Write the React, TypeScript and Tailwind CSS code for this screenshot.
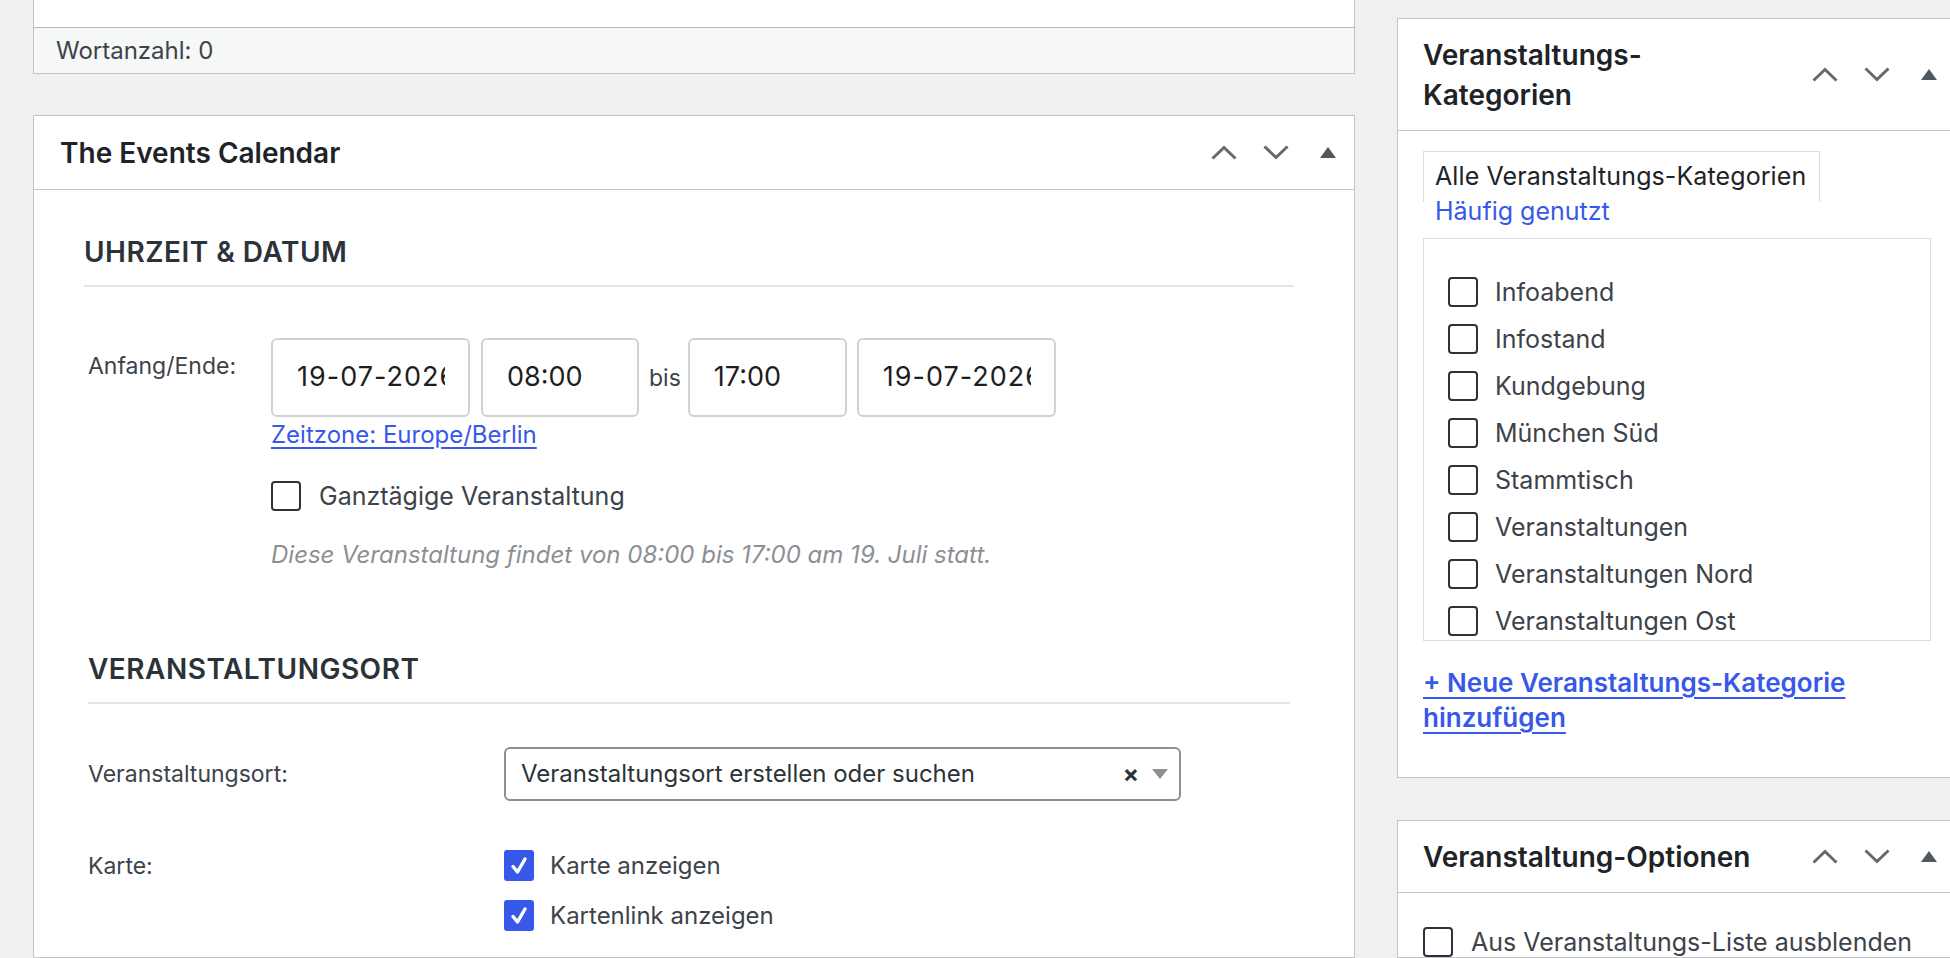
import React from "react";

const CATEGORIES = [
  "Infoabend",
  "Infostand",
  "Kundgebung",
  "München Süd",
  "Stammtisch",
  "Veranstaltungen",
  "Veranstaltungen Nord",
  "Veranstaltungen Ost",
];

function ChevronUp() {
  return (
    <svg width="26" height="15" viewBox="0 0 26 15" fill="none">
      <path d="M1.5 13.5L13 2.5L24.5 13.5" stroke="#646970" strokeWidth="3" />
    </svg>
  );
}

function ChevronDown() {
  return (
    <svg width="26" height="15" viewBox="0 0 26 15" fill="none">
      <path d="M1.5 1.5L13 12.5L24.5 1.5" stroke="#646970" strokeWidth="3" />
    </svg>
  );
}

function Triangle() {
  return (
    <svg width="16" height="11" viewBox="0 0 16 11">
      <polygon points="0,11 8,0 16,11" fill="#50575e" />
    </svg>
  );
}

// hoch / runter / zuklappen
function BoxControls() {
  return (
    <div className="flex items-center">
      <span className="flex w-[52px] justify-center">
        <ChevronUp />
      </span>
      <span className="flex w-[52px] justify-center">
        <ChevronDown />
      </span>
      <span className="flex w-[52px] justify-center">
        <Triangle />
      </span>
    </div>
  );
}

function Checkbox({ checked = false, className = "" }: { checked?: boolean; className?: string }) {
  if (checked) {
    return (
      <span className={`flex shrink-0 items-center justify-center rounded-[3px] bg-[#3858e9] ${className}`}>
        <svg width="18" height="20" viewBox="0 0 18 20" fill="none">
          <path d="M3 10.5L7.5 16L15 3" stroke="#fff" strokeWidth="3.4" strokeLinecap="round" strokeLinejoin="round" />
        </svg>
      </span>
    );
  }
  return <span className={`block shrink-0 rounded-[4px] border-2 border-[#2c3338] bg-white ${className}`} />;
}

// Datums-/Zeitfeld; das Datum ist rechts abgeschnitten wie im Browser
function DateTimeField({ value, width, date = false }: { value: string; width: string; date?: boolean }) {
  return (
    <div className={`flex h-[79px] shrink-0 items-center rounded-[6px] border-2 border-[#d2d2d2] bg-white pl-[24px] ${width}`}>
      <div
        className={`overflow-hidden whitespace-nowrap text-[27px] text-[#1e1e1e] ${
          date ? "w-[148px] tracking-[1px]" : "w-[110px]"
        }`}
      >
        {value}
      </div>
    </div>
  );
}

export default function App() {
  return (
    <div className="flex h-[958px] w-[1950px] overflow-hidden bg-[#f0f0f1] font-['Inter','Noto_Sans',sans-serif] text-[#3c434a]">
      {/* linke Spalte */}
      <div className="ml-[33px] flex w-[1322px] shrink-0 flex-col">
        <div className="h-[27px] border-x border-[#c3c4c7] bg-white" />
        <div className="flex h-[47px] items-center border border-t-[#b4b6b9] border-x-[#c3c4c7] border-b-[#c3c4c7] bg-[#f6f7f7] pl-[22px] text-[24px]">
          Wortanzahl: 0
        </div>

        <div className="mt-[41px] flex-1 border border-[#c3c4c7] bg-white">
          <div className="flex h-[74px] items-center justify-between border-b border-[#c3c4c7] pl-[26px]">
            <h2 className="text-[28px] font-semibold text-[#1d2327]">The Events Calendar</h2>
            <BoxControls />
          </div>

          {/* Uhrzeit & Datum */}
          <div className="ml-[50px] mr-[60px] pt-[45px]">
            <h3 className="border-b-2 border-[#e4e4e4] pb-[16px] text-[28px] font-semibold uppercase leading-[34px] tracking-[0.5px] text-[#2c3338]">
              Uhrzeit &amp; Datum
            </h3>
            <div className="mt-[51px] flex">
              <div className="w-[187px] shrink-0 pl-[4px] pt-[14px] text-[23px] leading-[28px]">Anfang/Ende:</div>
              <div>
                <div className="flex items-center">
                  <DateTimeField value="19-07-2026" width="w-[199px]" date />
                  <div className="ml-[11px]">
                    <DateTimeField value="08:00" width="w-[158px]" />
                  </div>
                  <span className="ml-[10px] text-[23px] leading-[28px]">bis</span>
                  <div className="ml-[7px]">
                    <DateTimeField value="17:00" width="w-[159px]" />
                  </div>
                  <div className="ml-[10px]">
                    <DateTimeField value="19-07-2026" width="w-[199px]" date />
                  </div>
                </div>
                <a className="mt-[4px] block w-fit text-[24px] leading-[28px] text-[#3858e9] underline underline-offset-[4px]">
                  Zeitzone: Europe/Berlin
                </a>
                <label className="mt-[32px] flex items-center gap-[18px] text-[25px] leading-[30px]">
                  <Checkbox className="h-[30px] w-[30px]" />
                  Ganztägige Veranstaltung
                </label>
                <p className="mt-[30px] text-[24px] italic leading-[28px] text-[#8c8f94]">
                  Diese Veranstaltung findet von 08:00 bis 17:00 am 19. Juli statt.
                </p>
              </div>
            </div>
          </div>

          {/* Veranstaltungsort */}
          <div className="ml-[54px] mr-[64px] pt-[83px]">
            <h3 className="border-b-2 border-[#e4e4e4] pb-[16px] text-[28px] font-semibold uppercase leading-[34px] tracking-[0.5px] text-[#2c3338]">
              Veranstaltungsort
            </h3>
            <div className="mt-[43px] flex items-center">
              <div className="w-[416px] shrink-0 text-[23px] leading-[28px]">Veranstaltungsort:</div>
              <div className="flex h-[54px] w-[677px] items-center justify-between rounded-[6px] border-2 border-[#8c8f94] pl-[15px] pr-[11px]">
                <span className="text-[24px] text-[#2c3338]">Veranstaltungsort erstellen oder suchen</span>
                <span className="flex items-center gap-[13px]">
                  <span className="text-[24px] font-bold leading-none text-[#2c3338]">×</span>
                  <svg width="16" height="10" viewBox="0 0 16 10">
                    <polygon points="0,0 16,0 8,10" fill="#8c8f94" />
                  </svg>
                </span>
              </div>
            </div>
            <div className="mt-[49px] flex">
              <div className="w-[416px] shrink-0 pt-[2px] text-[23px] leading-[28px]">Karte:</div>
              <div className="flex flex-col gap-[19px]">
                <label className="flex items-center gap-[16px] text-[24px] leading-[30px]">
                  <Checkbox checked className="h-[31px] w-[30px]" />
                  Karte anzeigen
                </label>
                <label className="flex items-center gap-[16px] text-[24px] leading-[30px]">
                  <Checkbox checked className="h-[31px] w-[30px]" />
                  Kartenlink anzeigen
                </label>
              </div>
            </div>
          </div>
        </div>
      </div>

      {/* rechte Spalte */}
      <div className="ml-[42px] flex w-[559px] shrink-0 flex-col pt-[18px]">
        <div className="border border-[#c3c4c7] bg-white">
          <div className="flex h-[112px] items-center justify-between border-b border-[#c3c4c7] pl-[25px]">
            <h2 className="text-[28px] font-semibold leading-[40px] text-[#1d2327]">
              Veranstaltungs-
              <br />
              Kategorien
            </h2>
            <BoxControls />
          </div>
          <div className="px-[25px] pb-[42px] pt-[20px]">
            <div className="h-[51px] w-fit border-x border-t border-[#dcdcde] pl-[11px] pr-[13px] pt-[9px] text-[25px] leading-[30px] tracking-[0.1px] text-[#1d2327]">
              Alle Veranstaltungs-Kategorien
            </div>
            <div className="relative -mt-[6px] pl-[12px] text-[25px] leading-[30px] text-[#3858e9]">Häufig genutzt</div>
            <div className="mt-[12px] h-[403px] w-[508px] overflow-hidden border border-[#dcdcde] pl-[24px] pt-[38px]">
              <ul className="flex flex-col gap-[17px]">
                {CATEGORIES.map((c) => (
                  <li key={c} className="flex items-center gap-[17px] text-[25px] leading-[30px]">
                    <Checkbox className="h-[30px] w-[30px]" />
                    {c}
                  </li>
                ))}
              </ul>
            </div>
            <a className="mt-[24px] block text-[26px] font-semibold leading-[35px] text-[#3858e9] underline decoration-2 underline-offset-[5px]">
              + Neue Veranstaltungs-Kategorie hinzufügen
            </a>
          </div>
        </div>

        <div className="mt-[42px] flex-1 border border-[#c3c4c7] bg-white">
          <div className="flex h-[72px] items-center justify-between border-b border-[#c3c4c7] pl-[25px]">
            <h2 className="text-[28px] font-semibold text-[#1d2327]">Veranstaltung-Optionen</h2>
            <BoxControls />
          </div>
          <div className="pl-[25px] pt-[34px]">
            <label className="flex items-center gap-[18px] text-[25px] leading-[30px]">
              <Checkbox className="h-[30px] w-[30px]" />
              Aus Veranstaltungs-Liste ausblenden
            </label>
          </div>
        </div>
      </div>
    </div>
  );
}
